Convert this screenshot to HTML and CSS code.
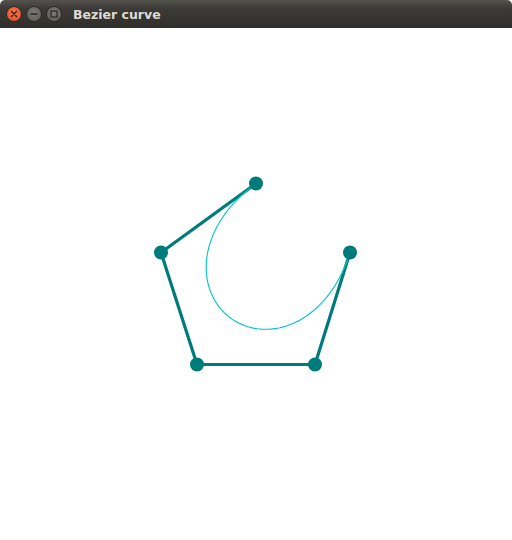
FILE: index.html
```html
<!DOCTYPE html>
<html>
<head>
<meta charset="utf-8">
<link rel="stylesheet" href="styles.css">
</head>
<body>
<div class="window">
  <div class="titlebar">
    <div class="buttons">
      <span class="btn close">
        <svg width="14" height="14" viewBox="0 0 14 14"><path d="M4.5 4.5L9.5 9.5M9.5 4.5L4.5 9.5" stroke="#3a1a10" stroke-width="1.4" stroke-linecap="round"/></svg>
      </span>
      <span class="btn">
        <svg width="14" height="14" viewBox="0 0 14 14"><path d="M3.5 7H10.5" stroke="#2f2e2b" stroke-width="1.6"/></svg>
      </span>
      <span class="btn">
        <svg width="14" height="14" viewBox="0 0 14 14"><rect x="4" y="4" width="6" height="6" fill="none" stroke="#2f2e2b" stroke-width="1.3"/></svg>
      </span>
    </div>
    <span class="title">Bezier curve</span>
  </div>
  <div class="canvas">
    <svg width="512" height="512" viewBox="0 27.5 512 512">
      <polyline points="256,183 161,252 197,364 315,364 350,252" fill="none" stroke="#007b7b" stroke-width="3.2" stroke-linejoin="round"/>
      <path id="curve" d="" fill="none" stroke="#00c4c4" stroke-width="1.1"/>
      <g fill="#007b7b">
        <circle cx="256" cy="183" r="7"/>
        <circle cx="161" cy="252" r="7"/>
        <circle cx="197" cy="364" r="7"/>
        <circle cx="315" cy="364" r="7"/>
        <circle cx="350" cy="252" r="7"/>
      </g>
    </svg>
  </div>
</div>
<script src="script.js"></script>
</body>
</html>
```
FILE: styles.css
```css
html, body {
  margin: 0;
  padding: 0;
  background: #ffffff;
}
.window {
  width: 512px;
  height: 540px;
  display: flex;
  flex-direction: column;
  overflow: hidden;
}
.titlebar {
  height: 28px;
  flex: 0 0 28px;
  display: flex;
  align-items: center;
  background: linear-gradient(#55534d, #3c3b37 30%, #2f2e2a);
  border-radius: 5px 5px 0 0;
  box-sizing: border-box;
  padding-left: 7px;
}
.buttons {
  display: flex;
  gap: 6px;
  align-items: center;
}
.btn {
  width: 14px;
  height: 14px;
  border-radius: 50%;
  background: radial-gradient(circle at 50% 40%, #7d7b75, #5a5852);
  box-shadow: 0 0 0 1px #2e2d29;
  display: flex;
}
.btn.close {
  background: radial-gradient(circle at 50% 40%, #f47a50, #e0491c);
}
.title {
  margin-left: 12px;
  font-family: "DejaVu Sans", sans-serif;
  font-weight: bold;
  font-size: 12.5px;
  color: #dfdbd2;
}
.canvas {
  flex: 1;
  background: #ffffff;
}
.canvas svg {
  display: block;
}
```
FILE: script.js
```js
(function () {
  var P = [[256,183],[161,252],[197,364],[315,364],[350,252]];
  var C = [1,4,6,4,1];
  var d = "";
  for (var i = 0; i <= 200; i++) {
    var t = i / 200, x = 0, y = 0;
    for (var k = 0; k < 5; k++) {
      var b = C[k] * Math.pow(1 - t, 4 - k) * Math.pow(t, k);
      x += b * P[k][0]; y += b * P[k][1];
    }
    d += (i ? "L" : "M") + x.toFixed(2) + " " + y.toFixed(2);
  }
  document.getElementById("curve").setAttribute("d", d);
})();
```
